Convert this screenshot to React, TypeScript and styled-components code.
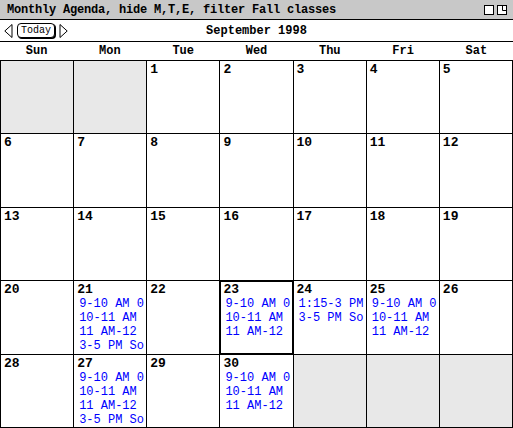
import styled, { createGlobalStyle } from 'styled-components';

const GlobalStyle = createGlobalStyle`
  html, body {
    margin: 0;
    padding: 0;
    background: #ffffff;
  }
`;

type Day = {
  num?: string;
  events?: string[];
  blank?: boolean;
  current?: boolean;
};

const mwf = ['9-10 AM 0', '10-11 AM', '11 AM-12'];

const weeks: Day[][] = [
  [{ blank: true }, { blank: true }, { num: '1' }, { num: '2' }, { num: '3' }, { num: '4' }, { num: '5' }],
  [{ num: '6' }, { num: '7' }, { num: '8' }, { num: '9' }, { num: '10' }, { num: '11' }, { num: '12' }],
  [{ num: '13' }, { num: '14' }, { num: '15' }, { num: '16' }, { num: '17' }, { num: '18' }, { num: '19' }],
  [
    { num: '20' },
    { num: '21', events: [...mwf, '3-5 PM So'] },
    { num: '22' },
    { num: '23', events: mwf, current: true },
    { num: '24', events: ['1:15-3 PM', '3-5 PM So'] },
    { num: '25', events: mwf },
    { num: '26' },
  ],
  [
    { num: '28' },
    { num: '27', events: [...mwf, '3-5 PM So'] },
    { num: '29' },
    { num: '30', events: mwf },
    { blank: true },
    { blank: true },
    { blank: true },
  ],
];

const dayNames = ['Sun', 'Mon', 'Tue', 'Wed', 'Thu', 'Fri', 'Sat'];

const Calendar = () => {
  return (
    <Frame>
      <GlobalStyle />
      <TitleBar>
        <TitleText>Monthly Agenda, hide M,T,E, filter Fall classes</TitleText>
        <WinButtons>
          <svg width="10" height="10" viewBox="0 0 10 10">
            <rect x="0.5" y="0.5" width="9" height="9" fill="#fff" stroke="#000" />
          </svg>
          <svg width="10" height="10" viewBox="0 0 10 10">
            <rect x="0.5" y="0.5" width="9" height="9" fill="#fff" stroke="#000" />
            <path d="M5.5 0.5 V5.5 H9.5" fill="none" stroke="#000" />
          </svg>
        </WinButtons>
      </TitleBar>
      <Toolbar>
        <Nav>
          <svg width="9" height="14" viewBox="0 0 9 14">
            <path d="M8 0.5 L0.8 7 L8 13.5 Z" fill="none" stroke="#000" />
          </svg>
          <TodayButton>Today</TodayButton>
          <svg width="9" height="14" viewBox="0 0 9 14">
            <path d="M1 0.5 L8.2 7 L1 13.5 Z" fill="none" stroke="#000" />
          </svg>
        </Nav>
        <MonthTitle>September 1998</MonthTitle>
        <span />
      </Toolbar>
      <HeaderRow>
        {dayNames.map((d) => (
          <HeaderCell key={d}>{d}</HeaderCell>
        ))}
      </HeaderRow>
      <Grid>
        {weeks.flat().map((day, i) => (
          <Cell key={i} $blank={day.blank} $current={day.current}>
            {day.num && <DayNum>{day.num}</DayNum>}
            {day.events?.map((e) => (
              <EventLine key={e}>{e}</EventLine>
            ))}
          </Cell>
        ))}
      </Grid>
    </Frame>
  );
};

const Frame = styled.div`
  width: 513px;
  height: 428px;
  display: flex;
  flex-direction: column;
  font-family: 'Liberation Mono', 'DejaVu Sans Mono', monospace;
  color: #000;
  overflow: hidden;
`;

const TitleBar = styled.div`
  height: 19px;
  background: #c8c8c8;
  border-bottom: 1px solid #000;
  display: flex;
  align-items: center;
  justify-content: space-between;
  padding: 0 6px 0 7px;
  flex-shrink: 0;
`;

const TitleText = styled.span`
  font-size: 12px;
  font-weight: bold;
  letter-spacing: -0.2px;
`;

const WinButtons = styled.div`
  display: flex;
  gap: 3px;
  svg {
    display: block;
  }
`;

const Toolbar = styled.div`
  height: 21px;
  border-bottom: 1px solid #000;
  display: grid;
  grid-template-columns: 1fr auto 1fr;
  align-items: center;
  flex-shrink: 0;
`;

const Nav = styled.div`
  display: flex;
  align-items: center;
  gap: 4px;
  padding-left: 4px;
  svg {
    display: block;
  }
`;

const TodayButton = styled.button`
  font-family: 'Liberation Mono', monospace;
  font-size: 10px;
  line-height: 12px;
  height: 15px;
  padding: 0 3px;
  border: 1px solid #000;
  border-radius: 4px;
  background: #fff;
  box-shadow: 1px 1px 0 #000;
  color: #000;
`;

const MonthTitle = styled.span`
  font-size: 12px;
  font-weight: bold;
`;

const HeaderRow = styled.div`
  height: 18px;
  border-bottom: 1px solid #000;
  display: grid;
  grid-template-columns: repeat(7, 1fr);
  align-items: center;
  flex-shrink: 0;
`;

const HeaderCell = styled.span`
  text-align: center;
  font-size: 12px;
  font-weight: bold;
`;

const Grid = styled.div`
  flex: 1;
  display: grid;
  grid-template-columns: repeat(7, 1fr);
  grid-template-rows: repeat(5, 1fr);
  gap: 1px;
  background: #000;
  padding: 0 1px 1px 1px;
  min-height: 0;
`;

const Cell = styled.div<{ $blank?: boolean; $current?: boolean }>`
  background: ${(p) => (p.$blank ? '#e8e8e8' : '#fff')};
  box-shadow: ${(p) => (p.$current ? 'inset 0 0 0 1px #000' : 'none')};
  padding: 2px 0 0 3px;
  overflow: hidden;
  min-width: 0;
`;

const DayNum = styled.div`
  font-size: 13px;
  font-weight: bold;
  line-height: 14px;
`;

const EventLine = styled.div`
  color: #0000ff;
  font-size: 12px;
  line-height: 14px;
  padding-left: 2px;
  white-space: nowrap;
`;

export default Calendar;
